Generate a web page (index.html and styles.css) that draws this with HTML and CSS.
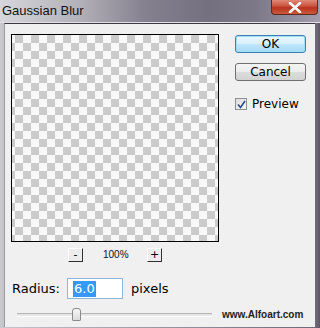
FILE: index.html
```html
<!DOCTYPE html>
<html lang="en">
<head>
  <meta charset="UTF-8">
  <title>Gaussian Blur</title>
  <link rel="stylesheet" href="styles.css">
</head>
<body>
  <div class="window">
    <!-- title bar -->
    <div class="titlebar">
      <span class="title">Gaussian Blur</span>
      <div class="close">
        <svg width="14" height="11" viewBox="0 0 14 11">
          <path d="M2 1 L12 10 M12 1 L2 10" stroke="#fff" stroke-width="2.6" stroke-linecap="round"/>
        </svg>
      </div>
    </div>

    <div class="client">
      <div class="top">
        <div class="left-col">
          <div class="preview"></div>
          <div class="zoom-row">
            <span class="zoom-btn">-</span>
            <span class="zoom-value">100%</span>
            <span class="zoom-btn">+</span>
          </div>
        </div>

        <div class="right-col">
          <button class="btn btn-default">OK</button>
          <button class="btn">Cancel</button>
          <label class="check">
            <span class="box">
              <svg width="9" height="9" viewBox="0 0 9 9">
                <path d="M1 4.5 L3.5 7.5 L8 1" fill="none" stroke="#2a4a8a" stroke-width="1.6"/>
              </svg>
            </span>
            Preview
          </label>
        </div>
      </div>

      <div class="radius-row">
        <span class="radius-label">Radius:</span>
        <span class="radius-input"><span class="selected">6.0</span></span>
        <span class="unit">pixels</span>
      </div>

      <div class="slider-row">
        <div class="slider">
          <div class="track"></div>
          <div class="thumb"></div>
        </div>
        <span class="credit">www.Alfoart.com</span>
      </div>
    </div>
  </div>
</body>
</html>
```

FILE: styles.css
```css
body {
  margin: 0;
  font-family: Tahoma, "DejaVu Sans", sans-serif;
}

.window {
  width: 320px;
  height: 328px;
  overflow: hidden;
  background: linear-gradient(to right, #c9c9cf 0px, #c4c4cb 4px, #6e6878 316px, #5c5664 320px);
}

.titlebar {
  height: 22px;
  display: flex;
  justify-content: space-between;
  background: linear-gradient(to right, #d6d6dc 0%, #b2b0b8 25%, #86818f 45%, #757080 65%, #7e7989 80%, #a29cab 100%);
  border-bottom: 1px solid #e2e0e6;
}

.title {
  font-family: "Liberation Sans", Arial, sans-serif;
  font-size: 13px;
  color: #111;
  padding: 3px 0 0 2px;
}

.close {
  width: 45px;
  height: 14px;
  margin-right: 2px;
  border: 1px solid #5a2a24;
  border-top: none;
  border-radius: 0 0 4px 4px;
  background: linear-gradient(to bottom, #e08a78 0%, #c9503a 45%, #b8321e 55%, #cc5a3c 100%);
  display: flex;
  justify-content: center;
  align-items: center;
}

.client {
  height: 304px;
  margin: 0 5px 0 4px;
  border-top: 1px solid #3e3a44;
  border-left: 1px solid #9a98a0;
  background: #f0f0f0;
  box-sizing: border-box;
}

.top {
  display: flex;
  padding: 10px 0 0 6px;
}

.left-col {
  width: 208px;
}

.preview {
  width: 206px;
  height: 206px;
  border: 1px solid #000;
  background-color: #f8f8f8;
  background-image:
    linear-gradient(45deg, #cbcbcb 25%, transparent 25%, transparent 75%, #cbcbcb 75%),
    linear-gradient(45deg, #cbcbcb 25%, transparent 25%, transparent 75%, #cbcbcb 75%);
  background-size: 16px 16px;
  background-position: -5px 0, 3px 8px;
}

.zoom-row {
  display: flex;
  justify-content: center;
  align-items: center;
  gap: 20px;
  margin-top: 6px;
  height: 13px;
}

.zoom-btn {
  width: 13px;
  height: 12px;
  border-right: 1px solid #303030;
  border-bottom: 1px solid #303030;
  border-top: 1px solid #fff;
  border-left: 1px solid #fff;
  background: #ececec;
  font-size: 11px;
  line-height: 11px;
  text-align: center;
  color: #000;
}

.zoom-value {
  font-family: "Liberation Sans", Arial, sans-serif;
  font-size: 10px;
  width: 24px;
  text-align: center;
  color: #111;
}

.right-col {
  display: flex;
  flex-direction: column;
  margin-left: 16px;
}

.btn {
  width: 71px;
  height: 18px;
  padding: 0;
  margin-top: 1px;
  font-family: Tahoma, "DejaVu Sans", sans-serif;
  font-size: 12px;
  color: #000;
  border: 1px solid #707070;
  border-radius: 3px;
  background: linear-gradient(to bottom, #f4f4f4 0%, #ececec 48%, #dcdcdc 52%, #d2d2d2 100%);
}

.btn + .btn {
  margin-top: 10px;
}

.btn-default {
  border-color: #3c7fb1;
  background: linear-gradient(to bottom, #eaf6fd 0%, #d9f0fc 48%, #bee6fd 52%, #a7d9f5 100%);
  box-shadow: inset 0 0 0 1px #9fe0f8;
}

.check {
  display: flex;
  align-items: center;
  gap: 5px;
  margin-top: 16px;
  font-size: 12px;
  color: #000;
}

.box {
  width: 10px;
  height: 10px;
  border: 1px solid #8e8f8f;
  background: linear-gradient(to bottom right, #dcdcdc, #fbfbfb);
  display: flex;
  justify-content: center;
  align-items: center;
}

.radius-row {
  display: flex;
  align-items: center;
  margin-top: 17px;
  padding-left: 7px;
  font-size: 13px;
  color: #000;
}

.radius-input {
  width: 56px;
  height: 21px;
  margin-left: 7px;
  border: 1px solid #8fb6d8;
  background: #fff;
  display: flex;
  align-items: center;
  padding-left: 5px;
  box-sizing: border-box;
}

.selected {
  background: #3399ff;
  color: #fff;
  padding: 0 1px;
  line-height: 16px;
}

.unit {
  margin-left: 8px;
}

.slider-row {
  display: flex;
  align-items: center;
  margin-top: 9px;
  padding-left: 12px;
}

.slider {
  position: relative;
  width: 195px;
  height: 13px;
}

.track {
  position: absolute;
  left: 0;
  right: 0;
  top: 5px;
  height: 2px;
  background: #e6e6e6;
  border-top: 1px solid #b4b4b4;
  border-bottom: 1px solid #fff;
}

.thumb {
  position: absolute;
  left: 55px;
  top: 0;
  width: 7px;
  height: 11px;
  border: 1px solid #8a8a8a;
  border-radius: 3px 3px 1px 1px;
  background: linear-gradient(to bottom, #f6f6f6, #dcdcdc);
}

.credit {
  margin-left: 10px;
  font-family: "Liberation Sans", Arial, sans-serif;
  font-size: 10px;
  font-weight: bold;
  color: #222;
}
```
